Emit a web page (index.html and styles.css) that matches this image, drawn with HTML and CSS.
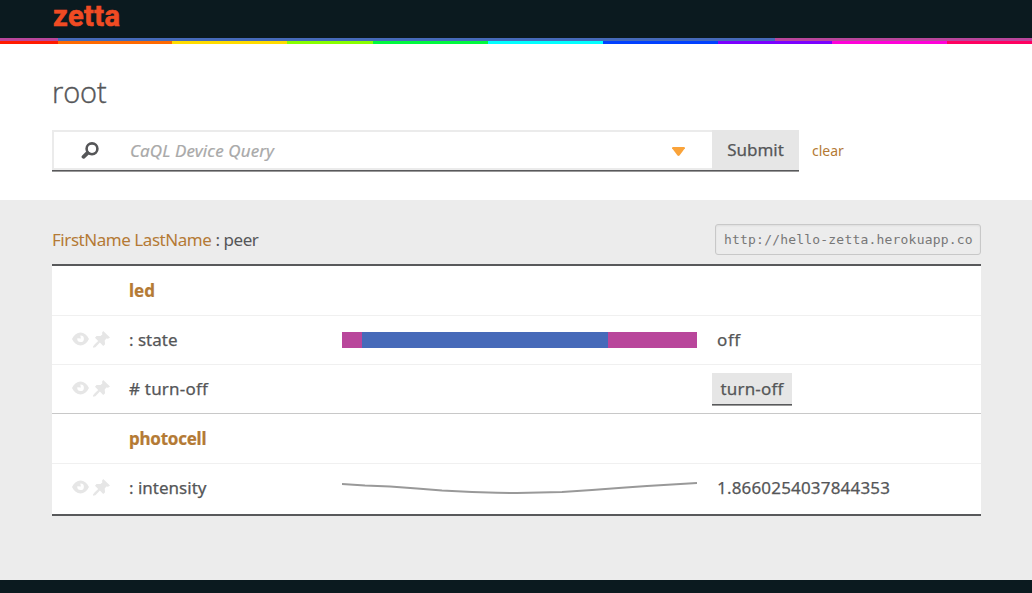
FILE: index.html
```html
<!DOCTYPE html>
<html lang="en">
<head>
<meta charset="utf-8">
<title>zetta</title>
<link rel="stylesheet" href="styles.css">
</head>
<body>
<svg class="defs" aria-hidden="true">
  <symbol id="eye" viewBox="0 0 17 14"><path fill-rule="evenodd" d="M0 7C2 2.700 5 .5 8.500.5S15 2.700 17 7c-2 4.300-5 6.500-8.500 6.500S2 11.300 0 7zm8.300-3.600L8.900 6.500 5.300 6.300A3.300 3.300 0 1 0 8.300 3.400z"/></symbol>
  <symbol id="pin" viewBox="0 0 17 17"><path d="M10.200 0 17 6.600l-2 1.200-1.600-.2-1.700 2 .4 3.600-1.900 1.700-3.300-3.300L2.400 16.200.2 16.700 0 15.500 1.500 13.600l3.700-3.600L2 6.700l1.500-1.700 4 .1L9.300 3.400 9.100 1.500z"/></symbol>
</svg>
<header class="top"><a class="logo">zetta</a></header>
<div class="strip states"><i class="pink"></i><i class="blue"></i><i class="pink rest"></i></div>
<div class="strip rainbow"></div>
<section class="search">
  <h1><span>root</span></h1>
  <form class="query">
    <div class="field">
      <svg class="glass" viewBox="0 0 18 18"><circle cx="11" cy="6.800" r="5.400"/><path d="M6.500 11 2.500 14.800"/></svg>
      <span class="placeholder">CaQL Device Query</span>
      <svg class="caret" viewBox="0 0 13 9"><path d="M1 0h11q1 0 .9 1.200L7.500 8.500q-1 .8-2 0L.1 1.200Q0 0 1 0z"/></svg>
    </div>
    <div class="submit"><span>Submit</span></div>
    <a class="clear">clear</a>
  </form>
</section>
<main>
  <div class="server">
    <h2><a>FirstName LastName</a> <span>: peer</span></h2>
    <div class="url"><div>http://hello-zetta.herokuapp.com/</div></div>
  </div>
  <div class="devices">
    <div class="row title"><b class="led">led</b></div>
    <div class="row">
      <div class="icons"><svg class="eye"><use href="#eye"/></svg><svg class="pin"><use href="#pin"/></svg></div>
      <span class="name state">: state</span>
      <div class="bar"><i class="pink"></i><i class="blue"></i><i class="pink rest"></i></div>
      <span class="value off">off</span>
    </div>
    <div class="row last">
      <div class="icons"><svg class="eye"><use href="#eye"/></svg><svg class="pin"><use href="#pin"/></svg></div>
      <span class="name turn"># turn-off</span>
      <div></div>
      <div class="action"><span>turn-off</span></div>
    </div>
    <div class="row title second"><b class="photocell">photocell</b></div>
    <div class="row end">
      <div class="icons"><svg class="eye"><use href="#eye"/></svg><svg class="pin"><use href="#pin"/></svg></div>
      <span class="name intensity">: intensity</span>
      <svg class="spark" viewBox="0 0 355 20"><path d="M0 5 23 6.500 48 7.500 75 9.500 100 11.500 130 13 155 13.800 175 14 220 13 250 11 280 8.800 305 6.900 330 5.400 355 4"/></svg>
      <span class="value number">1.8660254037844353</span>
    </div>
  </div>
</main>
<footer></footer>
</body>
</html>
```
FILE: styles.css
```css
* { box-sizing: border-box; }
body { margin: 0; height: 593px; overflow: hidden; display: flex; flex-direction: column; background: #fff; color: #555658; font: 17px/24px "Noto Sans", sans-serif; }
.defs { display: none; }
.top { height: 38px; background: #0b1a1f; padding-left: 53px; }
.logo { display: block; color: #f04b23; font: 700 29px/32px Roboto, sans-serif; letter-spacing: .4px; -webkit-text-stroke: .6px #f04b23; }
.strip { height: 3px; display: flex; }
.pink { background: #b9469b; }
.blue { background: #466ab9; }
.rest { flex: 1; }
.states .pink:first-child { width: 58px; }
.states .blue { width: 717px; }
.rainbow { background: linear-gradient(90deg, #ff1b00 0 58px, #ff6a00 58px 172px, #ffdc00 172px 287px, #8f0 287px 373px, #00f93e 373px 488px, #0ff 488px 603px, #0040ff 603px 718px, #7b00ff 718px 832px, #ff00d9 832px 947px, #ff0060 947px); }
.search { height: 156px; padding: 30px 52px 0; }
h1 { margin: 0; height: 56px; font: 300 29px/36px "Open Sans", sans-serif; }
h1 span { letter-spacing: -.1px; -webkit-text-stroke: .4px #555658; }
.query { display: flex; height: 42px; }
.field { width: 660px; height: 42px; display: flex; align-items: center; background: #fff; border-top: 2px solid #ebebeb; padding: 0 27px 2px 29px; box-shadow: inset 0 -1px #999, inset 0 -2px #58595b, inset 2px -4px #ebebeb; }
.glass { width: 18px; height: 18px; fill: none; stroke: #555658; stroke-width: 2.600; stroke-linecap: round; }
.glass path { stroke-width: 3.800; }
.placeholder { flex: 1; padding-left: 31px; font-style: italic; color: #a9a9a9; letter-spacing: .12px; -webkit-text-stroke: .2px #a9a9a9; }
.caret { width: 13px; height: 9px; fill: #faa33a; }
.submit { width: 87px; background: #e6e6e6; text-align: center; line-height: 40px; box-shadow: inset 0 -1px #999, inset 0 -2px #58595b; }
.clear { margin-left: 13px; font-size: 14px; line-height: 42px; color: #b47a35; }
.submit span, .value, .name, .action span { -webkit-text-stroke: .25px #555658; }
main { height: 380px; padding: 24px 51px 0 52px; background: #ececec; }
.server { display: flex; justify-content: space-between; height: 40px; }
h2 { margin: 0; font-size: 17px; font-weight: 400; line-height: 32px; white-space: nowrap; letter-spacing: -.45px; }
h2 a, .title { color: #b47a35; }
.url { width: 266px; height: 31px; border: 1px solid #c8c8c8; border-radius: 3px; padding: 0 7px 0 8px; box-shadow: inset 0 1px 2px #ddd; font: 13px/29px "DejaVu Sans Mono", monospace; letter-spacing: .2px; color: #777; }
.url div { overflow: hidden; white-space: nowrap; }
.devices { height: 252px; background: #fff; border-top: 2px solid #58595b; border-bottom: 2px solid #58595b; }
.row { height: 49px; display: grid; grid-template-columns: 77px 213px 355px 1fr; align-items: center; border-bottom: 1px solid #f0f0f0; }
.row:first-child, .second { height: 50px; }
.row.last { border-color: #c8c8c8; }
.row.end { height: 50px; border: 0; padding-bottom: 2px; }
.title b { grid-column: 2; -webkit-text-stroke: .2px #b47a35; }
.photocell { letter-spacing: -.25px; }
.icons { display: flex; gap: 4px; padding: 0 0 2px 20px; align-items: center; fill: #e6e6e6; }
.eye { width: 17px; height: 14px; }
.pin { width: 17px; height: 17px; }
.name, .value { white-space: nowrap; }
.turn { letter-spacing: .2px; }
.value { padding-left: 20px; }
.off { letter-spacing: .6px; }
.number { letter-spacing: .18px; }
.bar { display: flex; height: 16px; }
.bar .pink:first-child { width: 20px; }
.bar .blue { width: 246px; }
.action { margin-left: 15px; width: 80px; height: 33px; background: #e6e6e6; text-align: center; line-height: 31px; letter-spacing: .2px; box-shadow: inset 0 -1px #999, inset 0 -2px #58595b; }
.spark { width: 355px; height: 20px; margin-top: 2px; fill: none; stroke: #999; stroke-width: 2; }
footer { height: 13px; background: #0b1a1f; }
```
